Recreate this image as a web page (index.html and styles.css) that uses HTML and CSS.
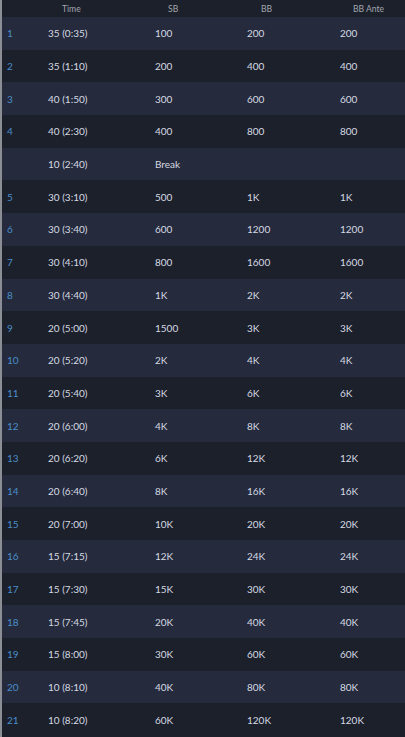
FILE: index.html
```html
<!DOCTYPE html>
<html>
<head>
<meta charset="utf-8">
<link rel="stylesheet" href="styles.css">
</head>
<body>
<div class="table">
  <div class="row head">
    <div class="c num"></div>
    <div class="c time">Time</div>
    <div class="c sb">SB</div>
    <div class="c bb">BB</div>
    <div class="c ante">BB Ante</div>
  </div>
  <div class="row"><div class="c num">1</div><div class="c time">35 (0:35)</div><div class="c sb">100</div><div class="c bb">200</div><div class="c ante">200</div></div>
  <div class="row"><div class="c num">2</div><div class="c time">35 (1:10)</div><div class="c sb">200</div><div class="c bb">400</div><div class="c ante">400</div></div>
  <div class="row"><div class="c num">3</div><div class="c time">40 (1:50)</div><div class="c sb">300</div><div class="c bb">600</div><div class="c ante">600</div></div>
  <div class="row"><div class="c num">4</div><div class="c time">40 (2:30)</div><div class="c sb">400</div><div class="c bb">800</div><div class="c ante">800</div></div>
  <div class="row"><div class="c num"></div><div class="c time">10 (2:40)</div><div class="c sb">Break</div><div class="c bb"></div><div class="c ante"></div></div>
  <div class="row"><div class="c num">5</div><div class="c time">30 (3:10)</div><div class="c sb">500</div><div class="c bb">1K</div><div class="c ante">1K</div></div>
  <div class="row"><div class="c num">6</div><div class="c time">30 (3:40)</div><div class="c sb">600</div><div class="c bb">1200</div><div class="c ante">1200</div></div>
  <div class="row"><div class="c num">7</div><div class="c time">30 (4:10)</div><div class="c sb">800</div><div class="c bb">1600</div><div class="c ante">1600</div></div>
  <div class="row"><div class="c num">8</div><div class="c time">30 (4:40)</div><div class="c sb">1K</div><div class="c bb">2K</div><div class="c ante">2K</div></div>
  <div class="row"><div class="c num">9</div><div class="c time">20 (5:00)</div><div class="c sb">1500</div><div class="c bb">3K</div><div class="c ante">3K</div></div>
  <div class="row"><div class="c num">10</div><div class="c time">20 (5:20)</div><div class="c sb">2K</div><div class="c bb">4K</div><div class="c ante">4K</div></div>
  <div class="row"><div class="c num">11</div><div class="c time">20 (5:40)</div><div class="c sb">3K</div><div class="c bb">6K</div><div class="c ante">6K</div></div>
  <div class="row"><div class="c num">12</div><div class="c time">20 (6:00)</div><div class="c sb">4K</div><div class="c bb">8K</div><div class="c ante">8K</div></div>
  <div class="row"><div class="c num">13</div><div class="c time">20 (6:20)</div><div class="c sb">6K</div><div class="c bb">12K</div><div class="c ante">12K</div></div>
  <div class="row"><div class="c num">14</div><div class="c time">20 (6:40)</div><div class="c sb">8K</div><div class="c bb">16K</div><div class="c ante">16K</div></div>
  <div class="row"><div class="c num">15</div><div class="c time">20 (7:00)</div><div class="c sb">10K</div><div class="c bb">20K</div><div class="c ante">20K</div></div>
  <div class="row"><div class="c num">16</div><div class="c time">15 (7:15)</div><div class="c sb">12K</div><div class="c bb">24K</div><div class="c ante">24K</div></div>
  <div class="row"><div class="c num">17</div><div class="c time">15 (7:30)</div><div class="c sb">15K</div><div class="c bb">30K</div><div class="c ante">30K</div></div>
  <div class="row"><div class="c num">18</div><div class="c time">15 (7:45)</div><div class="c sb">20K</div><div class="c bb">40K</div><div class="c ante">40K</div></div>
  <div class="row"><div class="c num">19</div><div class="c time">15 (8:00)</div><div class="c sb">30K</div><div class="c bb">60K</div><div class="c ante">60K</div></div>
  <div class="row"><div class="c num">20</div><div class="c time">10 (8:10)</div><div class="c sb">40K</div><div class="c bb">80K</div><div class="c ante">80K</div></div>
  <div class="row"><div class="c num">21</div><div class="c time">10 (8:20)</div><div class="c sb">60K</div><div class="c bb">120K</div><div class="c ante">120K</div></div>
</div>
</body>
</html>
```

FILE: styles.css
```css
html, body {
  margin: 0;
  padding: 0;
  background: #1c202b;
  height: 100%;
  overflow: hidden;
}
body {
  font-family: Lato, "Open Sans", sans-serif;
  border-left: 2px solid #8b8e95;
}
.table {
  display: flex;
  flex-direction: column;
}
.row {
  display: grid;
  grid-template-columns: 46px 107px 92px 93px 1fr;
  height: 32.7px;
  align-items: center;
  font-size: 10px;
  color: #d6dae3;
}
.row:nth-child(even) {
  background: #252a3c;
}
.row:nth-child(odd) {
  background: #1c202b;
}
.c {
  white-space: nowrap;
}
.num {
  padding-left: 5px;
  color: #4a8ecb;
}
.head {
  height: 17px;
  font-size: 8.6px;
  color: #a2a6ae;
}
.head .c {
  padding-left: 14px;
}
.head .sb, .head .ante {
  padding-left: 13px;
}
```
